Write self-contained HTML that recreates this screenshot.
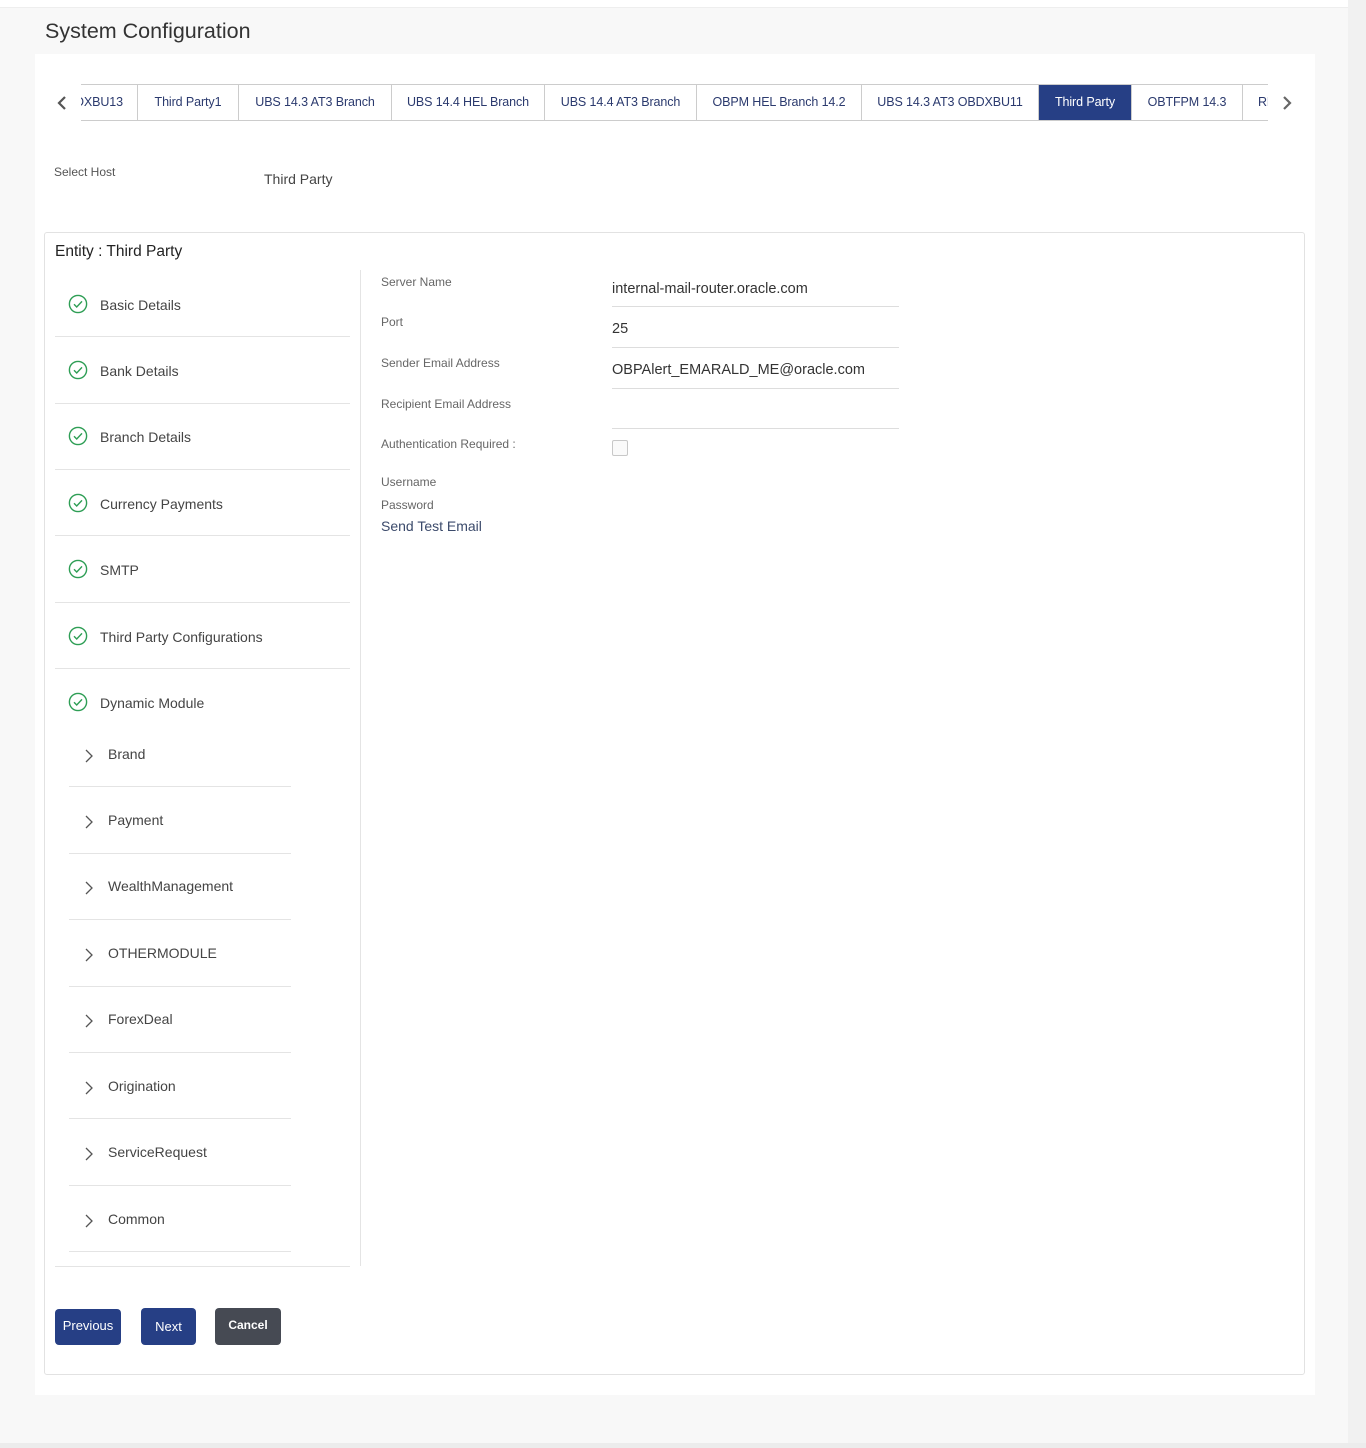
<!DOCTYPE html>
<html><head><meta charset="utf-8"><style>
*{margin:0;padding:0;box-sizing:border-box}
body{width:1366px;height:1448px;background:#f8f8f8;font-family:"Liberation Sans",sans-serif;position:relative;overflow:hidden;color:#333}
.a{position:absolute;white-space:nowrap}
.hl{position:absolute;height:1px;background:#e4e4e4}
.tab{position:absolute;top:0;height:37px;border:1px solid #ccc;border-right:none;background:#fff;color:#2b3a6e;font-size:12.5px;line-height:35px;text-align:center;letter-spacing:-0.1px;white-space:nowrap}
.lbl{position:absolute;left:381px;font-size:12px;color:#666;white-space:nowrap}
.val{position:absolute;left:612px;font-size:14.5px;color:#333;white-space:nowrap}
.item{position:absolute;left:100px;font-size:14px;color:#444;white-space:nowrap}
.sub{position:absolute;left:108px;font-size:14px;color:#444;white-space:nowrap}
.chk{position:absolute;left:68px;width:20px;height:20px}
.chev{position:absolute;left:83px;width:10px;height:14px}
.btn{position:absolute;color:#fff;font-size:13px;text-align:center;border-radius:4px}
</style></head><body>
<div class="a" style="left:0;top:0;width:1348px;height:8px;background:#fff;border-bottom:1px solid #eee"></div>
<div class="a" style="left:1348px;top:0;width:18px;height:1448px;background:#f1f1f1"></div>
<div class="a" style="left:0;top:1443px;width:1366px;height:5px;background:#ececec"></div>
<div class="a" style="left:45px;top:19px;font-size:21.5px;color:#333">System Configuration</div>
<div class="a" style="left:35px;top:54px;width:1280px;height:1341px;background:#fff"></div>

<svg class="a" style="left:56px;top:95px" width="12" height="16"><path d="M9 2 L3 8 L9 14" stroke="#555" stroke-width="2.2" fill="none"/></svg>
<svg class="a" style="left:1281px;top:95px" width="12" height="16"><path d="M3 2 L9 8 L3 14" stroke="#666" stroke-width="2.2" fill="none"/></svg>
<div class="a" style="left:81px;top:84px;width:1187px;height:37px;overflow:hidden">
<div class="tab" style="left:-40px;width:97px;border-left:none;text-align:right;padding-right:15px">OBDXBU13</div>
<div class="tab" style="left:56px;width:101px">Third Party1</div>
<div class="tab" style="left:157px;width:153px">UBS 14.3 AT3 Branch</div>
<div class="tab" style="left:310px;width:153px">UBS 14.4 HEL Branch</div>
<div class="tab" style="left:463px;width:152px">UBS 14.4 AT3 Branch</div>
<div class="tab" style="left:615px;width:165px">OBPM HEL Branch 14.2</div>
<div class="tab" style="left:780px;width:177px">UBS 14.3 AT3 OBDXBU11</div>
<div class="tab" style="left:957px;width:93px;background:#263f85;color:#fff;border-color:#ccc">Third Party</div>
<div class="tab" style="left:1050px;width:111px">OBTFPM 14.3</div>
<div class="tab" style="left:1161px;width:100px;text-align:left;padding-left:15px">RBS</div>
</div>

<div class="a" style="left:54px;top:165px;font-size:12px;color:#555">Select Host</div>
<div class="a" style="left:264px;top:171px;font-size:14px;color:#444">Third Party</div>

<div class="a" style="left:44px;top:232px;width:1261px;height:1143px;border:1px solid #e2e2e2;border-radius:3px"></div>
<div class="a" style="left:55px;top:243px;font-size:15.5px;color:#222">Entity : Third Party</div>
<div class="a" style="left:360px;top:270px;width:1px;height:996px;background:#e4e4e4"></div>

<div class="item" style="top:297px">Basic Details</div>
<div class="item" style="top:363px">Bank Details</div>
<div class="item" style="top:429px">Branch Details</div>
<div class="item" style="top:496px">Currency Payments</div>
<div class="item" style="top:562px">SMTP</div>
<div class="item" style="top:629px">Third Party Configurations</div>
<div class="item" style="top:695px">Dynamic Module</div>
<svg class="chk" style="top:294px" viewBox="0 0 20 20"><circle cx="10" cy="10" r="8.6" stroke="#2e9e55" stroke-width="1.4" fill="none"/><path d="M6 10.3l2.7 2.7 5.3-5.6" stroke="#2e9e55" stroke-width="1.4" fill="none"/></svg>
<svg class="chk" style="top:360px" viewBox="0 0 20 20"><circle cx="10" cy="10" r="8.6" stroke="#2e9e55" stroke-width="1.4" fill="none"/><path d="M6 10.3l2.7 2.7 5.3-5.6" stroke="#2e9e55" stroke-width="1.4" fill="none"/></svg>
<svg class="chk" style="top:426px" viewBox="0 0 20 20"><circle cx="10" cy="10" r="8.6" stroke="#2e9e55" stroke-width="1.4" fill="none"/><path d="M6 10.3l2.7 2.7 5.3-5.6" stroke="#2e9e55" stroke-width="1.4" fill="none"/></svg>
<svg class="chk" style="top:493px" viewBox="0 0 20 20"><circle cx="10" cy="10" r="8.6" stroke="#2e9e55" stroke-width="1.4" fill="none"/><path d="M6 10.3l2.7 2.7 5.3-5.6" stroke="#2e9e55" stroke-width="1.4" fill="none"/></svg>
<svg class="chk" style="top:559px" viewBox="0 0 20 20"><circle cx="10" cy="10" r="8.6" stroke="#2e9e55" stroke-width="1.4" fill="none"/><path d="M6 10.3l2.7 2.7 5.3-5.6" stroke="#2e9e55" stroke-width="1.4" fill="none"/></svg>
<svg class="chk" style="top:626px" viewBox="0 0 20 20"><circle cx="10" cy="10" r="8.6" stroke="#2e9e55" stroke-width="1.4" fill="none"/><path d="M6 10.3l2.7 2.7 5.3-5.6" stroke="#2e9e55" stroke-width="1.4" fill="none"/></svg>
<svg class="chk" style="top:692px" viewBox="0 0 20 20"><circle cx="10" cy="10" r="8.6" stroke="#2e9e55" stroke-width="1.4" fill="none"/><path d="M6 10.3l2.7 2.7 5.3-5.6" stroke="#2e9e55" stroke-width="1.4" fill="none"/></svg>
<div class="hl" style="left:55px;top:336px;width:295px"></div>
<div class="hl" style="left:55px;top:403px;width:295px"></div>
<div class="hl" style="left:55px;top:469px;width:295px"></div>
<div class="hl" style="left:55px;top:535px;width:295px"></div>
<div class="hl" style="left:55px;top:602px;width:295px"></div>
<div class="hl" style="left:55px;top:668px;width:295px"></div>

<div class="sub" style="top:746px">Brand</div>
<div class="sub" style="top:812px">Payment</div>
<div class="sub" style="top:878px">WealthManagement</div>
<div class="sub" style="top:945px">OTHERMODULE</div>
<div class="sub" style="top:1011px">ForexDeal</div>
<div class="sub" style="top:1078px">Origination</div>
<div class="sub" style="top:1144px">ServiceRequest</div>
<div class="sub" style="top:1211px">Common</div>
<svg class="chev" style="top:749px"><path d="M3 1l6 6-6 6" stroke="#555" stroke-width="1.3" fill="none"/></svg>
<svg class="chev" style="top:815px"><path d="M3 1l6 6-6 6" stroke="#555" stroke-width="1.3" fill="none"/></svg>
<svg class="chev" style="top:881px"><path d="M3 1l6 6-6 6" stroke="#555" stroke-width="1.3" fill="none"/></svg>
<svg class="chev" style="top:948px"><path d="M3 1l6 6-6 6" stroke="#555" stroke-width="1.3" fill="none"/></svg>
<svg class="chev" style="top:1014px"><path d="M3 1l6 6-6 6" stroke="#555" stroke-width="1.3" fill="none"/></svg>
<svg class="chev" style="top:1081px"><path d="M3 1l6 6-6 6" stroke="#555" stroke-width="1.3" fill="none"/></svg>
<svg class="chev" style="top:1147px"><path d="M3 1l6 6-6 6" stroke="#555" stroke-width="1.3" fill="none"/></svg>
<svg class="chev" style="top:1214px"><path d="M3 1l6 6-6 6" stroke="#555" stroke-width="1.3" fill="none"/></svg>
<div class="hl" style="left:69px;top:786px;width:222px"></div>
<div class="hl" style="left:69px;top:853px;width:222px"></div>
<div class="hl" style="left:69px;top:919px;width:222px"></div>
<div class="hl" style="left:69px;top:986px;width:222px"></div>
<div class="hl" style="left:69px;top:1052px;width:222px"></div>
<div class="hl" style="left:69px;top:1118px;width:222px"></div>
<div class="hl" style="left:69px;top:1185px;width:222px"></div>
<div class="hl" style="left:69px;top:1251px;width:222px"></div>
<div class="hl" style="left:55px;top:1266px;width:295px"></div>

<div class="lbl" style="top:275px">Server Name</div>
<div class="lbl" style="top:315px">Port</div>
<div class="lbl" style="top:356px">Sender Email Address</div>
<div class="lbl" style="top:397px">Recipient Email Address</div>
<div class="lbl" style="top:437px">Authentication Required :</div>
<div class="lbl" style="top:475px">Username</div>
<div class="lbl" style="top:498px">Password</div>
<div class="a" style="left:381px;top:518px;font-size:14px;color:#3b4a6b">Send Test Email</div>
<div class="val" style="top:281px">internal-mail-router.oracle.com</div>
<div class="val" style="top:321px">25</div>
<div class="val" style="top:362px">OBPAlert_EMARALD_ME@oracle.com</div>
<div class="hl" style="left:612px;top:306px;width:287px;background:#ddd"></div>
<div class="hl" style="left:612px;top:347px;width:287px;background:#ddd"></div>
<div class="hl" style="left:612px;top:388px;width:287px;background:#ddd"></div>
<div class="hl" style="left:612px;top:428px;width:287px;background:#ddd"></div>
<div class="a" style="left:612px;top:440px;width:16px;height:16px;border:1px solid #c8c8c8;border-radius:2px;background:#fafafa"></div>

<div class="btn" style="left:55px;top:1309px;width:66px;height:36px;background:#263f85;line-height:33px">Previous</div>
<div class="btn" style="left:141px;top:1308px;width:55px;height:37px;background:#263f85;line-height:37px">Next</div>
<div class="btn" style="left:215px;top:1308px;width:66px;height:37px;background:#464a53;line-height:35px;font-weight:bold;font-size:12px">Cancel</div>
</body></html>
